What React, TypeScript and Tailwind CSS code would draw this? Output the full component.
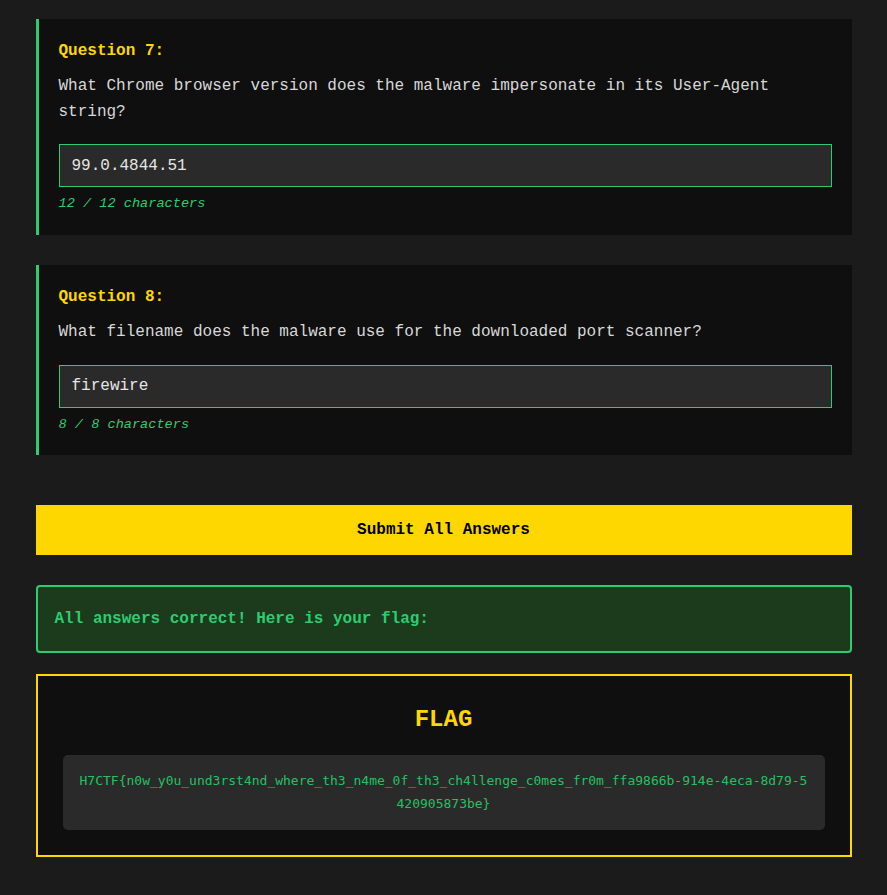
const questions = [
  {
    n: 7,
    text: 'What Chrome browser version does the malware impersonate in its User-Agent string?',
    answer: '99.0.4844.51',
  },
  {
    n: 8,
    text: 'What filename does the malware use for the downloaded port scanner?',
    answer: 'firewire',
  },
];

const flag =
  'H7CTF{n0w_y0u_und3rst4nd_where_th3_n4me_0f_th3_ch4llenge_c0mes_fr0m_ffa9866b-914e-4eca-8d79-5420905873be}';

export default function App() {
  return (
    <div className="min-h-screen bg-[#1b1b1b] pt-[19px] pb-[39px] font-['Liberation_Mono',monospace] text-[16px]">
      <div className="mx-auto w-[816px]">
        {questions.map((q) => (
          <div
            key={q.n}
            className="mb-[30px] border-l-[3px] border-[#2ecc71] bg-[#0f0f0f] p-5"
          >
            <div className="mb-[11px] font-bold leading-[24px] text-[#ffd700]">
              Question {q.n}:
            </div>
            <p className="mb-[19px] leading-[25.6px] text-[#d8d8d8]">{q.text}</p>
            <input
              readOnly
              value={q.answer}
              className="block h-[43px] w-full border border-[#2ecc71] bg-[#2a2a2a] px-3 text-[16px] text-[#e6e6e6] outline-none"
            />
            <div className="mt-[6px] text-[13.6px] italic leading-[21.8px] text-[#2ecc71]">
              {q.answer.length} / {q.answer.length} characters
            </div>
          </div>
        ))}

        <button className="mt-[50px] block h-[50px] w-full bg-[#ffd700] font-bold text-[16px] text-black">
          Submit All Answers
        </button>

        <div className="mt-[30px] flex h-[68px] items-center rounded border-2 border-[#2ecc71] bg-[#1c3a1c] px-[17px] font-bold text-[#2ecc71]">
          All answers correct! Here is your flag:
        </div>

        <div className="mt-[21px] border-2 border-[#ffd700] bg-[#0f0f0f] px-[25px] pt-[25px] pb-[25px] text-center">
          <h2 className="mb-[16px] text-[24px] font-bold leading-[38px] text-[#ffd700]">FLAG</h2>
          <div className="break-all rounded-[5px] bg-[#2a2a2a] px-[15px] pt-[14px] pb-[15px] font-['DejaVu_Sans_Mono',monospace] text-[13px] leading-[23px] text-[#27c062]">
            {flag}
          </div>
        </div>
      </div>
    </div>
  );
}
